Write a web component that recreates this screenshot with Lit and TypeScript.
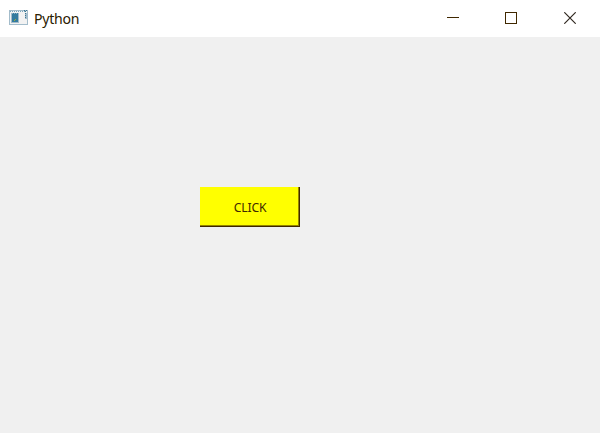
import { LitElement, html, css } from "lit";
import { customElement, property } from "lit/decorators.js";

@customElement("title-bar")
class TitleBar extends LitElement {
  @property() label = "";

  static styles = css`
    :host {
      display: flex;
      align-items: stretch;
      height: 37px;
      background: #fff;
      color: #2a2000;
    }
    .app {
      display: flex;
      flex: 1;
      align-items: center;
      gap: 5px;
      padding-left: 9px;
    }
    .label {
      padding-bottom: 2px;
      font: 15.2px/20px "Noto Sans", sans-serif;
      letter-spacing: -0.3px;
      transform: scaleX(0.93);
      transform-origin: left;
    }
    .control {
      display: flex;
      box-sizing: border-box;
      width: 58px;
      padding-bottom: 1px;
      align-items: center;
      justify-content: center;
    }
    .control:first-of-type {
      width: 58px;
    }
    .control:last-child {
      width: 60px;
    }
    svg {
      display: block;
    }
  `;

  render() {
    return html`
      <div class="app">
        <svg width="20" height="17" viewBox="0 0 20 17" shape-rendering="crispEdges">
          <rect x="0" y="0" width="19" height="15" fill="#a3bccb" />
          <rect x="1" y="1" width="17" height="13" fill="#f2f2f2" />
          <path d="M1 1.5H16" stroke="#78a5bb" stroke-dasharray="1 1" />
          <rect x="2" y="3" width="8" height="10" fill="#a3bccb" />
          <rect x="3" y="3" width="6" height="9" fill="#347b9e" />
          <path d="M3 3.5H9" stroke="#8ab0c4" stroke-dasharray="1 1" />
          <path d="M5 10.5H6M6 9.5H7" stroke="#9eae38" />
          <path d="M15 .5H16M17 .5H18M16 1.5H17" stroke="#3f7893" />
          <rect x="16" y="3" width="2" height="6" fill="#a3bccb" />
          <path d="M16 3.5H17M16 5.5H17M16 7.5H17" stroke="#3f7893" />
        </svg>
        <span class="label">${this.label}</span>
      </div>
      <div class="control">
        <svg width="12" height="12" shape-rendering="crispEdges">
          <path d="M0 5.5H12" stroke="#402800" />
        </svg>
      </div>
      <div class="control">
        <svg width="12" height="12" shape-rendering="crispEdges">
          <rect x=".5" y=".5" width="11" height="11" fill="none" stroke="#402800" />
        </svg>
      </div>
      <div class="control">
        <svg width="12" height="12">
          <path d="M.3 .3 11.7 11.7M11.7 .3 .3 11.7" stroke="#302820" stroke-width="1.2" />
        </svg>
      </div>
    `;
  }
}

@customElement("app-root")
class AppRoot extends LitElement {
  static styles = css`
    :host {
      display: flex;
      flex-direction: column;
      height: 100vh;
      overflow: hidden;
      background: #f0f0f0;
    }
    .content {
      flex: 1;
      padding: 150px 0 0 200px;
    }
    button {
      display: block;
      box-sizing: border-box;
      width: 100px;
      height: 40px;
      margin: 0;
      padding: 2px 0 0 1px;
      border: 0 solid #402800;
      border-width: 0 1px 1px 0;
      background: #ff0;
      box-shadow: inset -1px -1px #948400;
      color: #402800;
      font: 12.2px/16px "Noto Sans", sans-serif;
      letter-spacing: -0.2px;
    }
  `;

  render() {
    return html`
      <title-bar label="Python"></title-bar>
      <main class="content"><button>CLICK</button></main>
    `;
  }
}
